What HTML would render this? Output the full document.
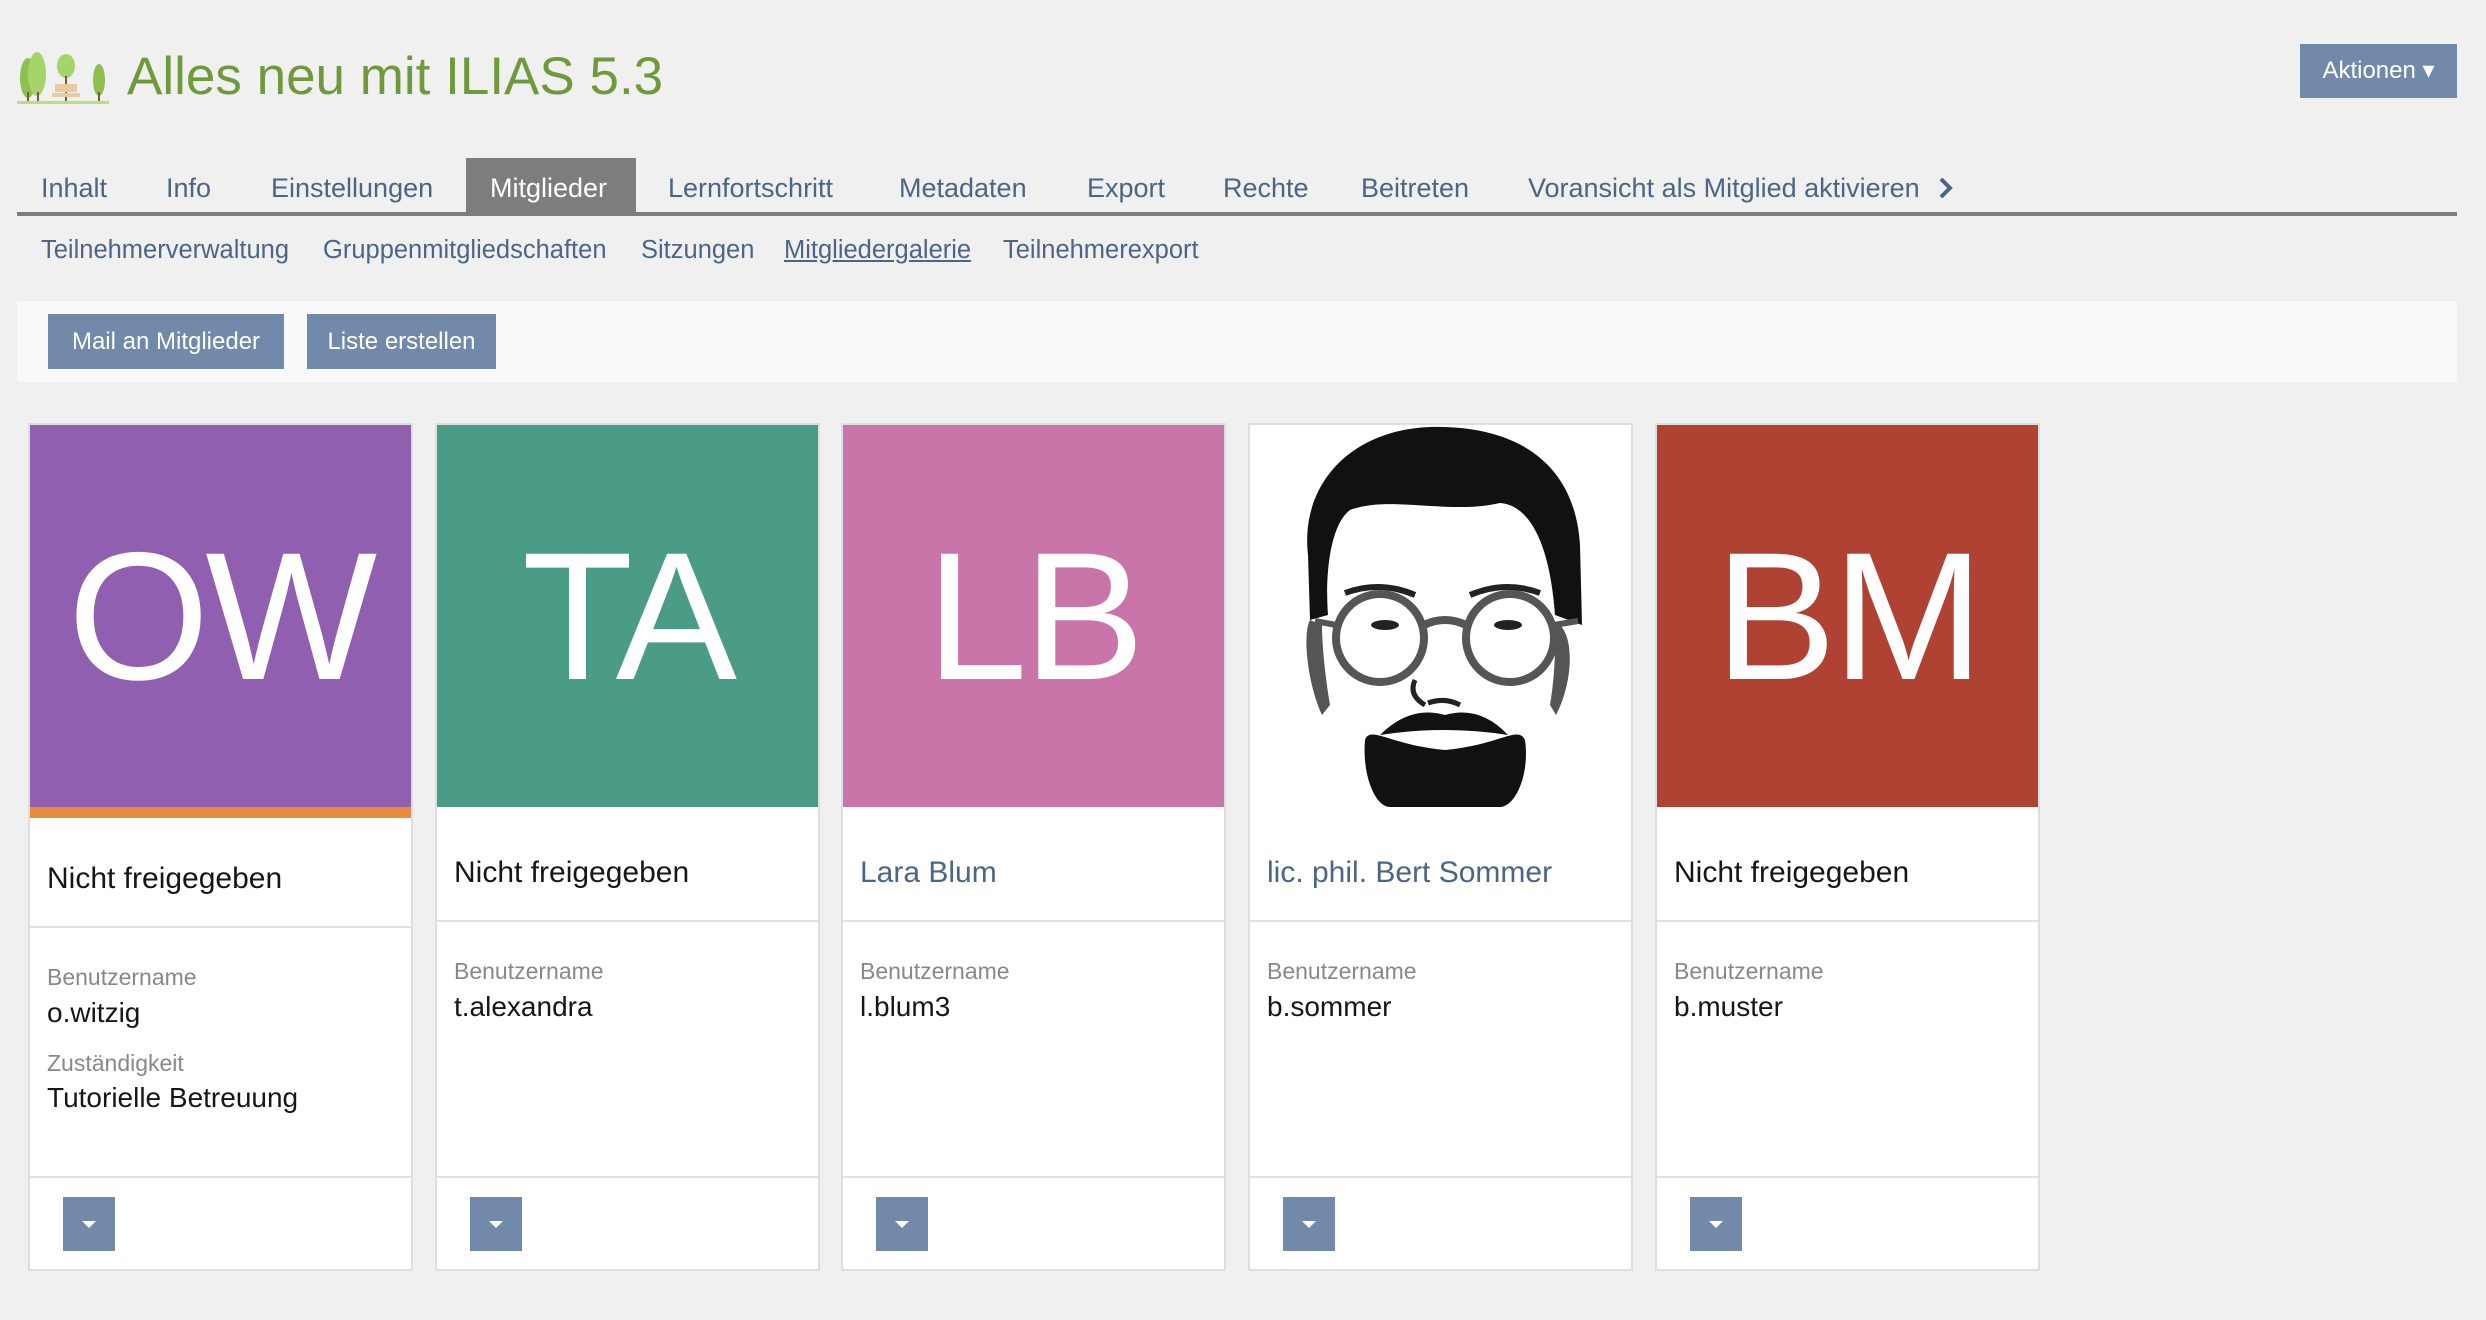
<!DOCTYPE html>
<html><head><meta charset="utf-8"><style>
*{box-sizing:border-box;margin:0;padding:0}
body{width:2486px;height:1320px;background:#f0f0f0;font-family:"Liberation Sans",sans-serif;position:relative;overflow:hidden;color:#161616}
.a{position:absolute;white-space:nowrap}
.title{left:127px;top:46px;font-size:53px;color:#6f9a3b}
.akt{left:2300px;top:44px;width:157px;height:54px;background:#7389a9;color:#fff;font-size:24px;line-height:54px;text-align:center}
.tab{top:173px;font-size:27px;color:#4c6586}
.tabact{left:466px;top:158px;width:170px;height:55px;background:#7d7d7d}
.line{left:17px;top:212px;width:2440px;height:4px;background:#7d7d7d}
.sub{top:236px;font-size:25.5px;color:#4c6586}
.tb{left:17px;top:301px;width:2440px;height:81px;background:#f9f9f9}
.btn{top:314px;height:55px;background:#7389a9;color:#fff;font-size:24px;line-height:55px;text-align:center}
.card{top:423px;width:385px;height:848px;background:#fff;border:2px solid #dedede}
.img{position:absolute;left:0;top:0;width:381px;height:382px;color:#fff;font-size:182px;text-align:center;line-height:382px;letter-spacing:-4px}
.name{position:absolute;left:17px;font-size:30px}
.sep{position:absolute;left:0;width:381px;height:2px;background:#e2e2e2}
.lbl{position:absolute;left:17px;font-size:23px;color:#888}
.val{position:absolute;left:17px;font-size:28px}
.dd{position:absolute;left:33px;top:772px;width:52px;height:54px;background:#7389a9}
.dd:after{content:"";position:absolute;left:19px;top:24px;border-left:7px solid transparent;border-right:7px solid transparent;border-top:7px solid #fff}
</style></head><body>
<svg class="a" style="left:17px;top:52px" width="92" height="52" viewBox="0 0 92 52">
<ellipse cx="11" cy="26" rx="8" ry="20" fill="#8dc04f"/><ellipse cx="20" cy="22" rx="9" ry="22" fill="#a5d46a"/>
<ellipse cx="49" cy="14" rx="9" ry="12" fill="#a5d46a"/><ellipse cx="82" cy="28" rx="6" ry="16" fill="#8dc04f"/>
<rect x="10" y="40" width="2" height="10" fill="#7a5a3a"/><rect x="20" y="40" width="2" height="10" fill="#7a5a3a"/><rect x="48" y="24" width="2" height="26" fill="#7a5a3a"/><rect x="81" y="40" width="2" height="10" fill="#7a5a3a"/>
<rect x="38" y="32" width="22" height="8" fill="#e8c9a0"/><rect x="35" y="41" width="28" height="4" fill="#e8c9a0"/>
<rect x="0" y="49" width="92" height="3" fill="#b8e07a"/></svg>
<div class="a title">Alles neu mit ILIAS 5.3</div>
<div class="a akt">Aktionen ▾</div>
<div class="a tabact"></div>
<div class="a line"></div>
<div class="a tab" style="left:41px">Inhalt</div>
<div class="a tab" style="left:166px">Info</div>
<div class="a tab" style="left:271px">Einstellungen</div>
<div class="a tab" style="left:490px;color:#fff">Mitglieder</div>
<div class="a tab" style="left:668px">Lernfortschritt</div>
<div class="a tab" style="left:899px">Metadaten</div>
<div class="a tab" style="left:1087px">Export</div>
<div class="a tab" style="left:1223px">Rechte</div>
<div class="a tab" style="left:1361px">Beitreten</div>
<div class="a tab" style="left:1528px">Voransicht als Mitglied aktivieren</div>
<svg class="a" style="left:1938px;top:176px" width="16" height="24" viewBox="0 0 16 24"><path d="M3 3 L12 12 L3 21" stroke="#4c6586" stroke-width="4" fill="none"/></svg>
<div class="a sub" style="left:41px">Teilnehmerverwaltung</div>
<div class="a sub" style="left:323px">Gruppenmitgliedschaften</div>
<div class="a sub" style="left:641px">Sitzungen</div>
<div class="a sub" style="left:784px;text-decoration:underline">Mitgliedergalerie</div>
<div class="a sub" style="left:1003px">Teilnehmerexport</div>
<div class="a tb"></div>
<div class="a btn" style="left:48px;width:236px">Mail an Mitglieder</div>
<div class="a btn" style="left:307px;width:189px">Liste erstellen</div>

<div class="a card" style="left:28px">
<div class="img" style="background:#915fb0">OW</div>
<div style="position:absolute;left:0;top:382px;width:381px;height:11px;background:#e98b3c"></div>
<div class="name" style="top:437px">Nicht freigegeben</div>
<div class="sep" style="top:501px"></div>
<div class="lbl" style="top:539px">Benutzername</div>
<div class="val" style="top:572px">o.witzig</div>
<div class="lbl" style="top:625px">Zuständigkeit</div>
<div class="val" style="top:657px">Tutorielle Betreuung</div>
<div class="sep" style="top:751px"></div><div class="dd"></div>
</div>

<div class="a card" style="left:435px">
<div class="img" style="background:#4a9c86">TA</div>
<div class="name" style="top:431px">Nicht freigegeben</div>
<div class="sep" style="top:495px"></div>
<div class="lbl" style="top:533px">Benutzername</div>
<div class="val" style="top:566px">t.alexandra</div>
<div class="sep" style="top:751px"></div><div class="dd"></div>
</div>

<div class="a card" style="left:841px">
<div class="img" style="background:#c975aa">LB</div>
<div class="name" style="top:431px;color:#4c6586">Lara Blum</div>
<div class="sep" style="top:495px"></div>
<div class="lbl" style="top:533px">Benutzername</div>
<div class="val" style="top:566px">l.blum3</div>
<div class="sep" style="top:751px"></div><div class="dd"></div>
</div>

<div class="a card" style="left:1248px">
<svg style="position:absolute;left:0;top:0" width="381" height="382" viewBox="0 0 381 382">
<rect width="381" height="382" fill="#fff"/>
<path d="M58 130 C50 60 100 5 180 2 C270 0 325 40 330 120 L332 200 L305 190 C300 120 280 80 250 78 C200 90 140 70 100 85 C80 100 75 150 78 190 L60 195 Z" fill="#111"/>
<path d="M60 195 C52 210 58 260 72 290 L80 280 C75 250 72 220 72 200 Z" fill="#555"/>
<path d="M310 200 C325 215 322 260 306 290 L300 280 C305 250 306 220 304 200 Z" fill="#555"/>
<path d="M95 168 Q130 155 165 170" stroke="#222" stroke-width="6" fill="none"/>
<path d="M220 170 Q255 155 290 168" stroke="#222" stroke-width="6" fill="none"/>
<circle cx="130" cy="213" r="44" fill="none" stroke="#555" stroke-width="8"/>
<circle cx="260" cy="213" r="44" fill="none" stroke="#555" stroke-width="8"/>
<path d="M174 200 Q195 190 216 200" stroke="#555" stroke-width="8" fill="none"/>
<path d="M86 200 L65 196 M304 200 L328 196" stroke="#555" stroke-width="6"/>
<ellipse cx="135" cy="200" rx="14" ry="5" fill="#222"/><ellipse cx="258" cy="200" rx="14" ry="5" fill="#222"/>
<path d="M165 255 Q158 270 175 280 M178 278 Q195 272 210 280" stroke="#222" stroke-width="5" fill="none"/>
<path d="M130 310 Q160 280 195 290 Q230 280 258 310 Q195 300 130 310 Z" fill="#111"/>
<path d="M115 315 C120 300 140 320 195 325 C250 320 268 300 275 315 C280 350 265 382 250 382 L140 382 C125 382 112 350 115 315 Z" fill="#111"/>
</svg>
<div class="name" style="top:431px;color:#4c6586">lic. phil. Bert Sommer</div>
<div class="sep" style="top:495px"></div>
<div class="lbl" style="top:533px">Benutzername</div>
<div class="val" style="top:566px">b.sommer</div>
<div class="sep" style="top:751px"></div><div class="dd"></div>
</div>

<div class="a card" style="left:1655px">
<div class="img" style="background:#b04233">BM</div>
<div class="name" style="top:431px">Nicht freigegeben</div>
<div class="sep" style="top:495px"></div>
<div class="lbl" style="top:533px">Benutzername</div>
<div class="val" style="top:566px">b.muster</div>
<div class="sep" style="top:751px"></div><div class="dd"></div>
</div>
</body></html>
